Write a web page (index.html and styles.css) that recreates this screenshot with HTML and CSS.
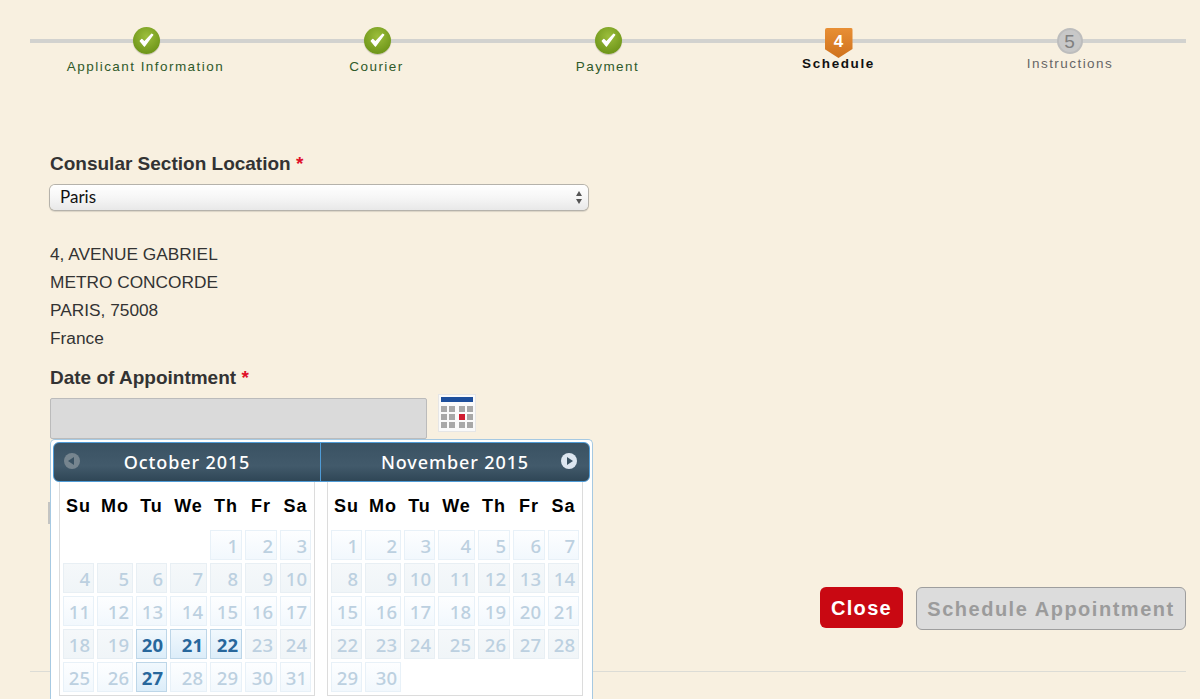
FILE: index.html
```html
<!DOCTYPE html>
<html lang="en">
<head>
<meta charset="utf-8">
<title>Schedule</title>
<link rel="stylesheet" href="styles.css">
</head>
<body>
<div class="page">
  <div class="steps">
    <div class="step done"><span class="bullet"><svg width="27" height="27" viewBox="0 0 26 26"><defs><radialGradient id="g" cx="50%" cy="35%" r="65%"><stop offset="0" stop-color="#9cbe3c"/><stop offset="1" stop-color="#6d9418"/></radialGradient></defs><circle cx="13" cy="13" r="13" fill="url(#g)"/><path d="M7 13.5l4 5 8-11-1-.6-7 7.5-2.5-2.5z" fill="#fff" stroke="#fff" stroke-width="1.2" stroke-linejoin="round"/></svg></span><span class="label">Applicant Information</span></div>
    <div class="step done"><span class="bullet"><svg width="27" height="27" viewBox="0 0 26 26"><circle cx="13" cy="13" r="13" fill="url(#g)"/><path d="M7 13.5l4 5 8-11-1-.6-7 7.5-2.5-2.5z" fill="#fff" stroke="#fff" stroke-width="1.2" stroke-linejoin="round"/></svg></span><span class="label">Courier</span></div>
    <div class="step done"><span class="bullet"><svg width="27" height="27" viewBox="0 0 26 26"><circle cx="13" cy="13" r="13" fill="url(#g)"/><path d="M7 13.5l4 5 8-11-1-.6-7 7.5-2.5-2.5z" fill="#fff" stroke="#fff" stroke-width="1.2" stroke-linejoin="round"/></svg></span><span class="label">Payment</span></div>
    <div class="step current"><span class="shield">4</span><span class="label">Schedule</span></div>
    <div class="step todo"><span class="num">5</span><span class="label">Instructions</span></div>
  </div>

  <form class="form">
    <div class="field-label">Consular Section Location <span class="req">*</span></div>
    <div class="select"><span class="select-value">Paris</span><span class="arrows"><i class="up"></i><i class="down"></i></span></div>
    <address class="addr">4, AVENUE GABRIEL<br>METRO CONCORDE<br>PARIS, 75008<br>France</address>
    <div class="field-label date-label">Date of Appointment <span class="req">*</span></div>
    <div class="date-row">
      <div class="date-input"></div>
      <span class="cal-icon"><svg width="38" height="38" viewBox="0 0 38 38"><rect x=".5" y=".5" width="37" height="37" fill="#fafafa" stroke="#e6e6e6"/><rect x="3" y="3" width="32" height="5" fill="#1d4f9c"/><g fill="#a8a8a8"><rect x="3" y="12" width="6" height="6"/><rect x="11" y="12" width="6" height="6"/><rect x="21" y="12" width="6" height="6"/><rect x="29" y="12" width="6" height="6"/><rect x="3" y="20" width="6" height="6"/><rect x="11" y="20" width="6" height="6"/><rect x="29" y="20" width="6" height="6"/><rect x="3" y="28" width="6" height="6"/><rect x="11" y="28" width="6" height="6"/><rect x="21" y="28" width="6" height="6"/><rect x="29" y="28" width="6" height="6"/></g><rect x="21" y="20" width="6" height="6" fill="#d01c30"/></svg></span>
    </div>
  </form>

  <div class="actions">
    <span class="hidden-edge"></span>
    <button type="button" class="btn close">Close</button>
    <button type="button" class="btn schedule">Schedule Appointment</button>
  </div>
  <hr class="rule">
</div>

<div class="picker" id="picker">
  <div class="picker-head">
    <div class="head-month first"><span class="nav prev"><i></i></span>October 2015</div>
    <div class="head-month second">November 2015<span class="nav next"><i></i></span></div>
  </div>
  <div class="months">
    <table class="month">
      <thead><tr><th>Su</th><th>Mo</th><th>Tu</th><th>We</th><th>Th</th><th>Fr</th><th>Sa</th></tr></thead>
      <tbody>
        <tr><td class="blank"></td><td class="blank"></td><td class="blank"></td><td class="blank"></td><td>1</td><td>2</td><td>3</td></tr>
        <tr class="dim"><td>4</td><td>5</td><td>6</td><td>7</td><td>8</td><td>9</td><td>10</td></tr>
        <tr><td>11</td><td>12</td><td>13</td><td>14</td><td>15</td><td>16</td><td>17</td></tr>
        <tr class="dim"><td>18</td><td>19</td><td class="on">20</td><td class="on">21</td><td class="on">22</td><td>23</td><td>24</td></tr>
        <tr><td>25</td><td>26</td><td class="on">27</td><td>28</td><td>29</td><td>30</td><td>31</td></tr>
      </tbody>
    </table>
    <table class="month">
      <thead><tr><th>Su</th><th>Mo</th><th>Tu</th><th>We</th><th>Th</th><th>Fr</th><th>Sa</th></tr></thead>
      <tbody>
        <tr><td>1</td><td>2</td><td>3</td><td>4</td><td>5</td><td>6</td><td>7</td></tr>
        <tr class="dim"><td>8</td><td>9</td><td>10</td><td>11</td><td>12</td><td>13</td><td>14</td></tr>
        <tr><td>15</td><td>16</td><td>17</td><td>18</td><td>19</td><td>20</td><td>21</td></tr>
        <tr class="dim"><td>22</td><td>23</td><td>24</td><td>25</td><td>26</td><td>27</td><td>28</td></tr>
        <tr><td>29</td><td>30</td><td class="blank"></td><td class="blank"></td><td class="blank"></td><td class="blank"></td><td class="blank"></td></tr>
      </tbody>
    </table>
  </div>
</div>
</body>
</html>
```
FILE: styles.css
```css
* { box-sizing: border-box; }
html, body { margin: 0; height: 699px; overflow: hidden; }
body { background: #f8f0e0; font-family: "Liberation Sans", Arial, sans-serif; color: #333; position: relative; }
.page { padding: 28px 14px 0 30px; }

.steps { display: grid; grid-template-columns: repeat(5, 231px); height: 40px; background: linear-gradient(#d2d2cf, #d2d2cf) 0 11px / 100% 4px no-repeat; width: 1156px; }
.step { display: flex; flex-direction: column; align-items: center; font-size: 13.5px; letter-spacing: 1.45px; white-space: nowrap; }
.bullet { height: 27px; width: 27px; margin: -1px 0 0 1px; border-radius: 50%; line-height: 0; box-shadow: 0 1px 1px rgba(0,0,0,.2); }
.step .label { display: block; }
.done .label { color: #2f5a2a; margin-top: 5px; }
.current .label { color: #111; font-weight: bold; margin-top: -2px; letter-spacing: 1.6px; }
.todo .label { color: #666; margin: 2px 0 0 1px; }
.current .shield { width: 28px; height: 30px; background: linear-gradient(#e88f35, #cf711c); color: #fff; font-weight: bold; font-size: 17px; letter-spacing: 0; text-align: center; line-height: 28px; clip-path: polygon(0 0, 100% 0, 100% 70%, 50% 100%, 0 70%); border-radius: 2px 2px 0 0; }
.todo .num { width: 26px; height: 26px; border-radius: 50%; background: #c8c8c8; border: 2px solid #bdbdbd; color: #808080; font-size: 19px; letter-spacing: 0; text-align: center; line-height: 23px; }

.form { padding: 85px 0 0 20px; }
.field-label { font-size: 19px; font-weight: bold; line-height: 21px; color: #333; }
.req { color: #e0102a; }
.select { width: 538px; height: 25px; margin-top: 11px; padding: 0 6px 0 10px; display: flex; justify-content: space-between; align-items: center; font: 17px "Lato", "Liberation Sans", sans-serif; color: #111; background: linear-gradient(#fff, #f6f6f6 50%, #e8e8e8); border-radius: 5px; box-shadow: 0 0 0 1px #b5b2ab, 0 1px 1px 1px rgba(0,0,0,.12); }
.select-value { padding-bottom: 2px; }
.arrows { display: flex; flex-direction: column; gap: 3px; }
.arrows i { display: block; width: 0; height: 0; border-left: 3px solid transparent; border-right: 3px solid transparent; }
.arrows .up { border-bottom: 5px solid #555; }
.arrows .down { border-top: 5px solid #555; }
.addr { font-style: normal; font-size: 17.3px; line-height: 28px; margin-top: 30px; color: #333; }
.date-label { margin-top: 15px; }
.date-row { display: flex; align-items: flex-start; margin-top: 10px; }
.date-input { width: 377px; height: 41px; background: #dadada; border: 1px solid #bbb; border-radius: 2px; }
.cal-icon { margin-left: 11px; margin-top: -4px; line-height: 0; }

.actions { display: flex; justify-content: flex-end; gap: 13px; align-items: flex-start; margin-top: 148px; position: relative; }
.hidden-edge { position: absolute; left: 18px; top: -85px; width: 3px; height: 22px; background: #c4c4c2; }
.btn { font-family: "Liberation Sans", Arial, sans-serif; font-weight: bold; font-size: 20px; letter-spacing: 1.52px; padding: 2px 0 0; border-radius: 6px; }
.close { width: 83px; height: 41px; background: #c90812; color: #fff; border: 0; letter-spacing: 1.3px; }
.schedule { width: 270px; height: 43px; background: #dcdcdc; color: #9b9b9b; border: 1px solid #9e9e9e; }
.rule { margin: 41px 0 0; border: 0; border-top: 1px solid #dcdcd6; }

.picker { position: absolute; left: 50px; top: 439px; width: 543px; height: 260px; overflow: hidden; background: #fff; border: 1px solid #a6c9e2; border-bottom: 0; border-radius: 5px 5px 0 0; padding: 2px; }
.picker-head { display: flex; height: 40px; border: 1px solid #4f9bd6; border-radius: 6px; background: linear-gradient(#3a5263, #425a6b 60%, #2f4656); color: #fff; font-family: "Noto Sans", "Liberation Sans", sans-serif; font-size: 18px; letter-spacing: .9px; font-weight: 500; }
.head-month { position: relative; display: flex; align-items: center; justify-content: center; }
.first { width: 267px; border-right: 1px solid #4f9bd6; }
.second { flex: 1; }
.nav { position: absolute; top: 10px; width: 16px; height: 16px; border-radius: 50%; }
.prev { left: 10px; background: #76858f; }
.next { right: 12px; background: #dde6f0; }
.nav i { position: absolute; top: 4px; width: 0; height: 0; border-top: 4px solid transparent; border-bottom: 4px solid transparent; }
.prev i { left: 4px; border-right: 6px solid #3a5263; }
.next i { left: 6px; border-left: 6px solid #3a5263; }

.months { display: flex; padding: 0 0 0 6px; gap: 12px; }
.month { width: 256px; flex: none; table-layout: fixed; border-collapse: separate; border-spacing: 3px; border: 1px solid #dcdcdc; border-top: 0; height: 211px; background: #fff; font-family: "Noto Sans", "Liberation Sans", sans-serif; }
.month th { font-family: "Liberation Sans", Arial, sans-serif; font-size: 18px; font-weight: bold; color: #000; height: 42px; letter-spacing: 1px; padding: 0; width: 32px; }
.month th:nth-child(1) { width: 31px; }
.month th:nth-child(2) { width: 36px; }
.month th:nth-child(3) { width: 31px; }
.month th:nth-child(4) { width: 37px; }
.month th:nth-child(7) { width: 31px; }
.month td { height: 30px; padding: 0 3px 0 0; text-align: right; font-size: 18.5px; font-weight: 500; color: #bcd0e0; background: linear-gradient(#fdfeff, #f2f8fd); border: 1px solid #e8f1f8; }
.month .dim td { background: linear-gradient(#f5f8fa, #f0f5f8); border-color: #e8eff4; }
.month td.blank { background: none; border: 0; }
.month td.on { color: #27679c; font-weight: bold; background: linear-gradient(#f1f8fd, #dcedf9); border-color: #bdd6e8; }
```
